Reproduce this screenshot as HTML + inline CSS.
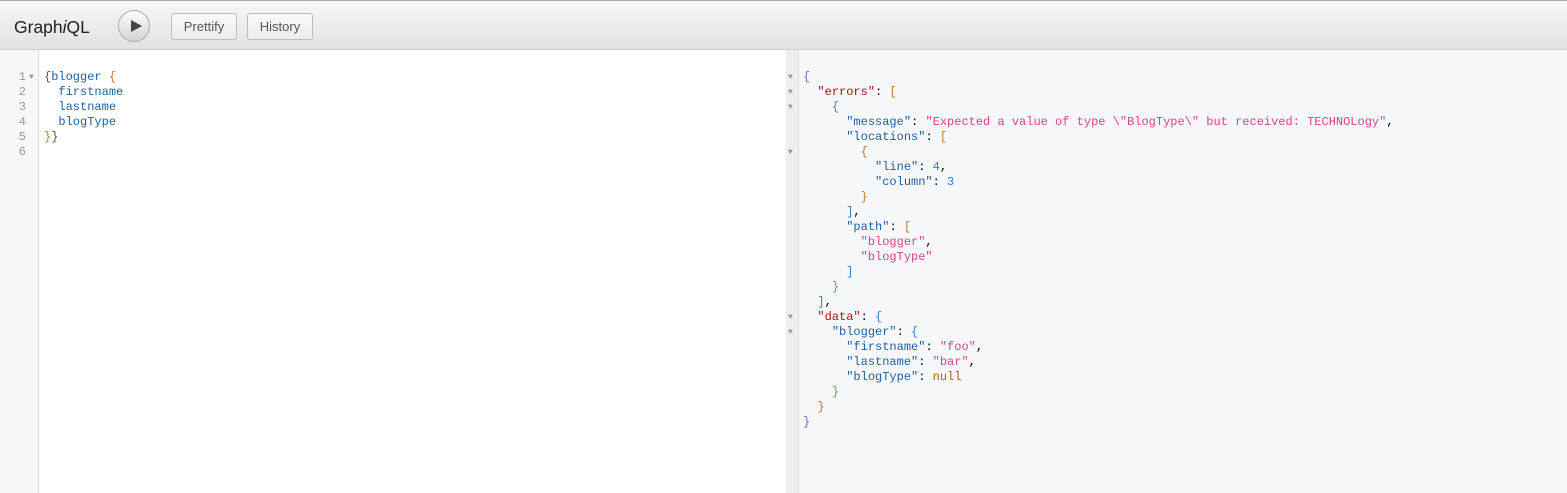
<!DOCTYPE html>
<html><head><style>
body{margin:0;width:1567px;height:493px;overflow:hidden;background:#fff;font-family:"Liberation Sans",sans-serif;position:relative}
.top{position:absolute;left:0;top:0;width:1567px;height:1px;background:#aaa}
.tb{position:absolute;left:0;top:1px;width:1567px;height:48px;background:linear-gradient(#f7f7f7,#e2e2e2);border-bottom:1px solid #d0d0d0}
.title{position:absolute;left:14px;top:16px;font-size:17.5px;color:#222}
.run{position:absolute;left:118px;top:9px;width:32px;height:32px;border-radius:50%;border:1px solid #aaa;background:linear-gradient(#fdfdfd,#d2d3d6);box-sizing:border-box}
.run:after{content:"";position:absolute;left:12px;top:9px;border-left:11px solid #444;border-top:6.5px solid transparent;border-bottom:6.5px solid transparent}
.btn{position:absolute;top:12px;height:27px;border:1px solid #bbb;border-radius:3px;background:linear-gradient(#f9f9f9,#ececec);box-sizing:border-box;font-size:13px;color:#555;line-height:25px;text-align:center}
.gut{position:absolute;left:0;top:50px;width:38px;height:443px;background:#f7f7f7;border-right:1px solid #ddd}
.code{position:absolute;font-family:"Liberation Mono",monospace;font-size:12px;line-height:15px;white-space:pre}
.rp{position:absolute;left:786px;top:50px;width:781px;height:443px;background:#f6f7f8}
.rg{position:absolute;left:786px;top:50px;width:12px;height:443px;background:#eeeeee;border-right:1px solid #e0e0e0}
.ln{color:#999;text-align:right}
.ar{color:#999;font-size:8px}
.k{color:#1f61a0}.kd{color:#a11}.s{color:#d64292}.n{color:#2882f9}.nl{color:#a06500}
.b0{color:#6b6bc8}.b1{color:#c07a2e}.b2{color:#3a82c4}.p{color:#555}
</style></head><body>
<div class="top"></div>
<div class="tb">
<div class="title">Graph<i>i</i>QL</div>
<div class="run"></div>
<div class="btn" style="left:171px;width:66px">Prettify</div>
<div class="btn" style="left:247px;width:66px">History</div>
</div>
<div class="gut"></div>
<div class="code ln" style="left:4px;top:70px;width:22px">1
2
3
4
5
6</div>
<div class="code ar" style="left:29px;top:70px;line-height:15px">▼</div>
<div class="code" style="left:44px;top:70px"><span class="p">{</span><span class="k">blogger</span> <span class="b1">{</span>
  <span class="k">firstname</span>
  <span class="k">lastname</span>
  <span class="k">blogType</span>
<span class="b1">}</span><span class="p">}</span>
</div>
<div class="rp"></div>
<div class="rg"></div>
<div class="code ar" style="left:788px;top:70px;line-height:15px">▼
▼
▼


▼










▼
▼</div>
<div class="code" style="left:803px;top:70px"><span class="b0">{</span>
  <span class="kd">"errors"</span>: <span class="b1">[</span>
    <span class="b2">{</span>
      <span class="k">"message"</span>: <span class="s">"Expected a value of type \"BlogType\" but received: TECHNOLogy"</span>,
      <span class="k">"locations"</span>: <span class="b1">[</span>
        <span class="b1">{</span>
          <span class="k">"line"</span>: <span class="n">4</span>,
          <span class="k">"column"</span>: <span class="n">3</span>
        <span class="b1">}</span>
      <span class="b2">]</span>,
      <span class="k">"path"</span>: <span class="b1">[</span>
        <span class="s">"blogger"</span>,
        <span class="s">"blogType"</span>
      <span class="b2">]</span>
    <span class="b1">}</span>
  <span class="b2">]</span>,
  <span class="kd">"data"</span>: <span class="b2">{</span>
    <span class="k">"blogger"</span>: <span class="b2">{</span>
      <span class="k">"firstname"</span>: <span class="s">"foo"</span>,
      <span class="k">"lastname"</span>: <span class="s">"bar"</span>,
      <span class="k">"blogType"</span>: <span class="nl">null</span>
    <span class="b1">}</span>
  <span class="b1">}</span>
<span class="b0">}</span></div>
</body></html>
